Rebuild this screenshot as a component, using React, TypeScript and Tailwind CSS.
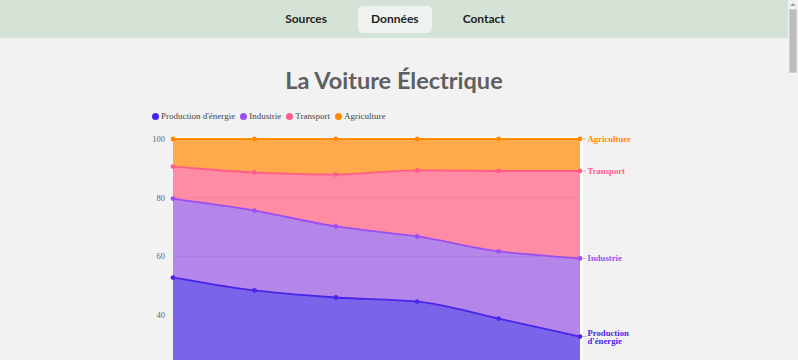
import React from 'react';

type Series = { name: string; line: string; fill: string; values: number[] };

// stacked values (top edge of each layer)
const SERIES: Series[] = [
  { name: 'Agriculture', line: '#ff8a00', fill: '#ffa94b', values: [100, 100, 100, 100, 100, 100] },
  { name: 'Transport', line: '#ff5c8a', fill: '#ff8ca5', values: [90.6, 88.6, 87.9, 89.3, 89.1, 89.1] },
  { name: 'Industrie', line: '#9b4ff0', fill: '#b486ea', values: [79.7, 75.6, 70.2, 66.8, 61.7, 59.3] },
  { name: "Production d'énergie", line: '#4a24e8', fill: '#7a64e9', values: [52.8, 48.4, 46.0, 44.6, 38.8, 32.7] },
];

const LEGEND = [
  { name: "Production d'énergie", color: '#4a24e8' },
  { name: 'Industrie', color: '#9b4ff0' },
  { name: 'Transport', color: '#ff5c8a' },
  { name: 'Agriculture', color: '#ff8a00' },
];

const X0 = 29;
const X1 = 436;
const Y100 = 9;
const PER = 2.935; // px per unit

const xAt = (i: number) => X0 + ((X1 - X0) * i) / 5;
const yAt = (v: number) => Y100 + (100 - v) * PER;

// monotone cubic path
function smooth(pts: [number, number][]) {
  const n = pts.length;
  const d: number[] = [];
  const m: number[] = [];
  for (let i = 0; i < n - 1; i++) d.push((pts[i + 1][1] - pts[i][1]) / (pts[i + 1][0] - pts[i][0]));
  for (let i = 0; i < n; i++) {
    if (i === 0) m.push(d[0]);
    else if (i === n - 1) m.push(d[n - 2]);
    else m.push(d[i - 1] * d[i] <= 0 ? 0 : (2 * d[i - 1] * d[i]) / (d[i - 1] + d[i]));
  }
  let p = `M${pts[0][0]},${pts[0][1]}`;
  for (let i = 0; i < n - 1; i++) {
    const h = (pts[i + 1][0] - pts[i][0]) / 3;
    p += ` C${pts[i][0] + h},${pts[i][1] + m[i] * h} ${pts[i + 1][0] - h},${pts[i + 1][1] - m[i + 1] * h} ${pts[i + 1][0]},${pts[i + 1][1]}`;
  }
  return p;
}

function Chart() {
  const bottom = yAt(0);
  return (
    <svg width={500} height={230} className="block" style={{ fontFamily: '"Liberation Serif", serif' }}>
      {SERIES.map(s => {
        const pts = s.values.map((v, i) => [xAt(i), yAt(v)] as [number, number]);
        return (
          <path key={s.name + 'a'} d={`${smooth(pts)} L${X1},${bottom} L${X0},${bottom} Z`} fill={s.fill} />
        );
      })}
      <line x1={X0} x2={X1} y1={Y100 - 1.5} y2={Y100 - 1.5} stroke="#ffffff" />
      {[100, 80, 60, 40].map(v => (
        <g key={v}>
          <line x1={X0} x2={X1} y1={yAt(v)} y2={yAt(v)} stroke="rgba(0,0,0,0.05)" />
          <text x={X0 - 8} y={yAt(v) + 3} textAnchor="end" fontSize={8.5} fill="#666">{v}</text>
        </g>
      ))}
      <line x1={X1 + 1.5} x2={X1 + 1.5} y1={Y100} y2={bottom} stroke="#ffffff" strokeWidth={2} />
      {SERIES.map(s => {
        const pts = s.values.map((v, i) => [xAt(i), yAt(v)] as [number, number]);
        return (
          <g key={s.name}>
            <path d={smooth(pts)} fill="none" stroke={s.line} strokeWidth={1.8} />
            {pts.map(([x, y], i) => (
              <circle key={i} cx={x} cy={y} r={2.4} fill={s.line} />
            ))}
            <line x1={X1 + 3} x2={X1 + 6} y1={pts[5][1]} y2={pts[5][1]} stroke="#bbb" />
          </g>
        );
      })}
      <g fontSize={8.7} fontWeight={700}>
        <text x={X1 + 7.5} y={yAt(100) + 3} fill="#ff8a00">Agriculture</text>
        <text x={X1 + 7.5} y={yAt(89.1) + 3} fill="#ff5c8a">Transport</text>
        <text x={X1 + 7.5} y={yAt(59.3) + 3} fill="#9b4ff0">Industrie</text>
        <text x={X1 + 7.5} y={yAt(32.7) - 1} fill="#4a24e8">Production</text>
        <text x={X1 + 7.5} y={yAt(32.7) + 7.5} fill="#4a24e8">d'énergie</text>
      </g>
    </svg>
  );
}

function Scrollbar() {
  return (
    <div className="w-[10px] shrink-0 bg-[#f1f1f1] flex flex-col items-center">
      <div className="h-[9px] flex items-center justify-center">
        <span className="w-0 h-0 border-l-[3px] border-r-[3px] border-b-[3px] border-l-transparent border-r-transparent border-b-[#a3a3a3]" />
      </div>
      <div className="w-[8px] h-[64px] bg-[#bdbdbd] border border-[#d0d0d0]" />
    </div>
  );
}

export default function App() {
  const nav = ['Sources', 'Données', 'Contact'];
  return (
    <div className="h-[360px] overflow-hidden flex bg-[#f2f2f2]" style={{ fontFamily: 'Lato, "Open Sans", sans-serif' }}>
      <main className="flex-1 min-w-0">
        <nav className="h-[38px] bg-[#d5e3d6] flex items-center justify-center gap-[18px] pl-[2px]">
          {nav.map(n => (
            <a
              key={n}
              className={`px-[13px] h-[27px] flex items-center rounded-[5px] text-[12px] font-bold text-[#222] ${n === 'Données' ? 'bg-[#eef3ef]' : ''}`}
            >
              {n}
            </a>
          ))}
        </nav>
        <h1 className="mt-[22px] text-center text-[23.5px] font-bold text-[#5f5f5f] leading-[40px]">La Voiture Électrique</h1>
        <div className="w-[500px] mx-auto mt-[10px]">
          <div className="flex items-center gap-[5px] pl-[8px] text-[9px] text-[#444]" style={{ fontFamily: '"Liberation Serif", serif' }}>
            {LEGEND.map(l => (
              <span key={l.name} className="flex items-center gap-[2px]">
                <span className="w-[7px] h-[7px] rounded-full" style={{ background: l.color }} />
                {l.name}
              </span>
            ))}
          </div>
          <div className="mt-[6px]">
            <Chart />
          </div>
        </div>
      </main>
      <Scrollbar />
    </div>
  );
}
